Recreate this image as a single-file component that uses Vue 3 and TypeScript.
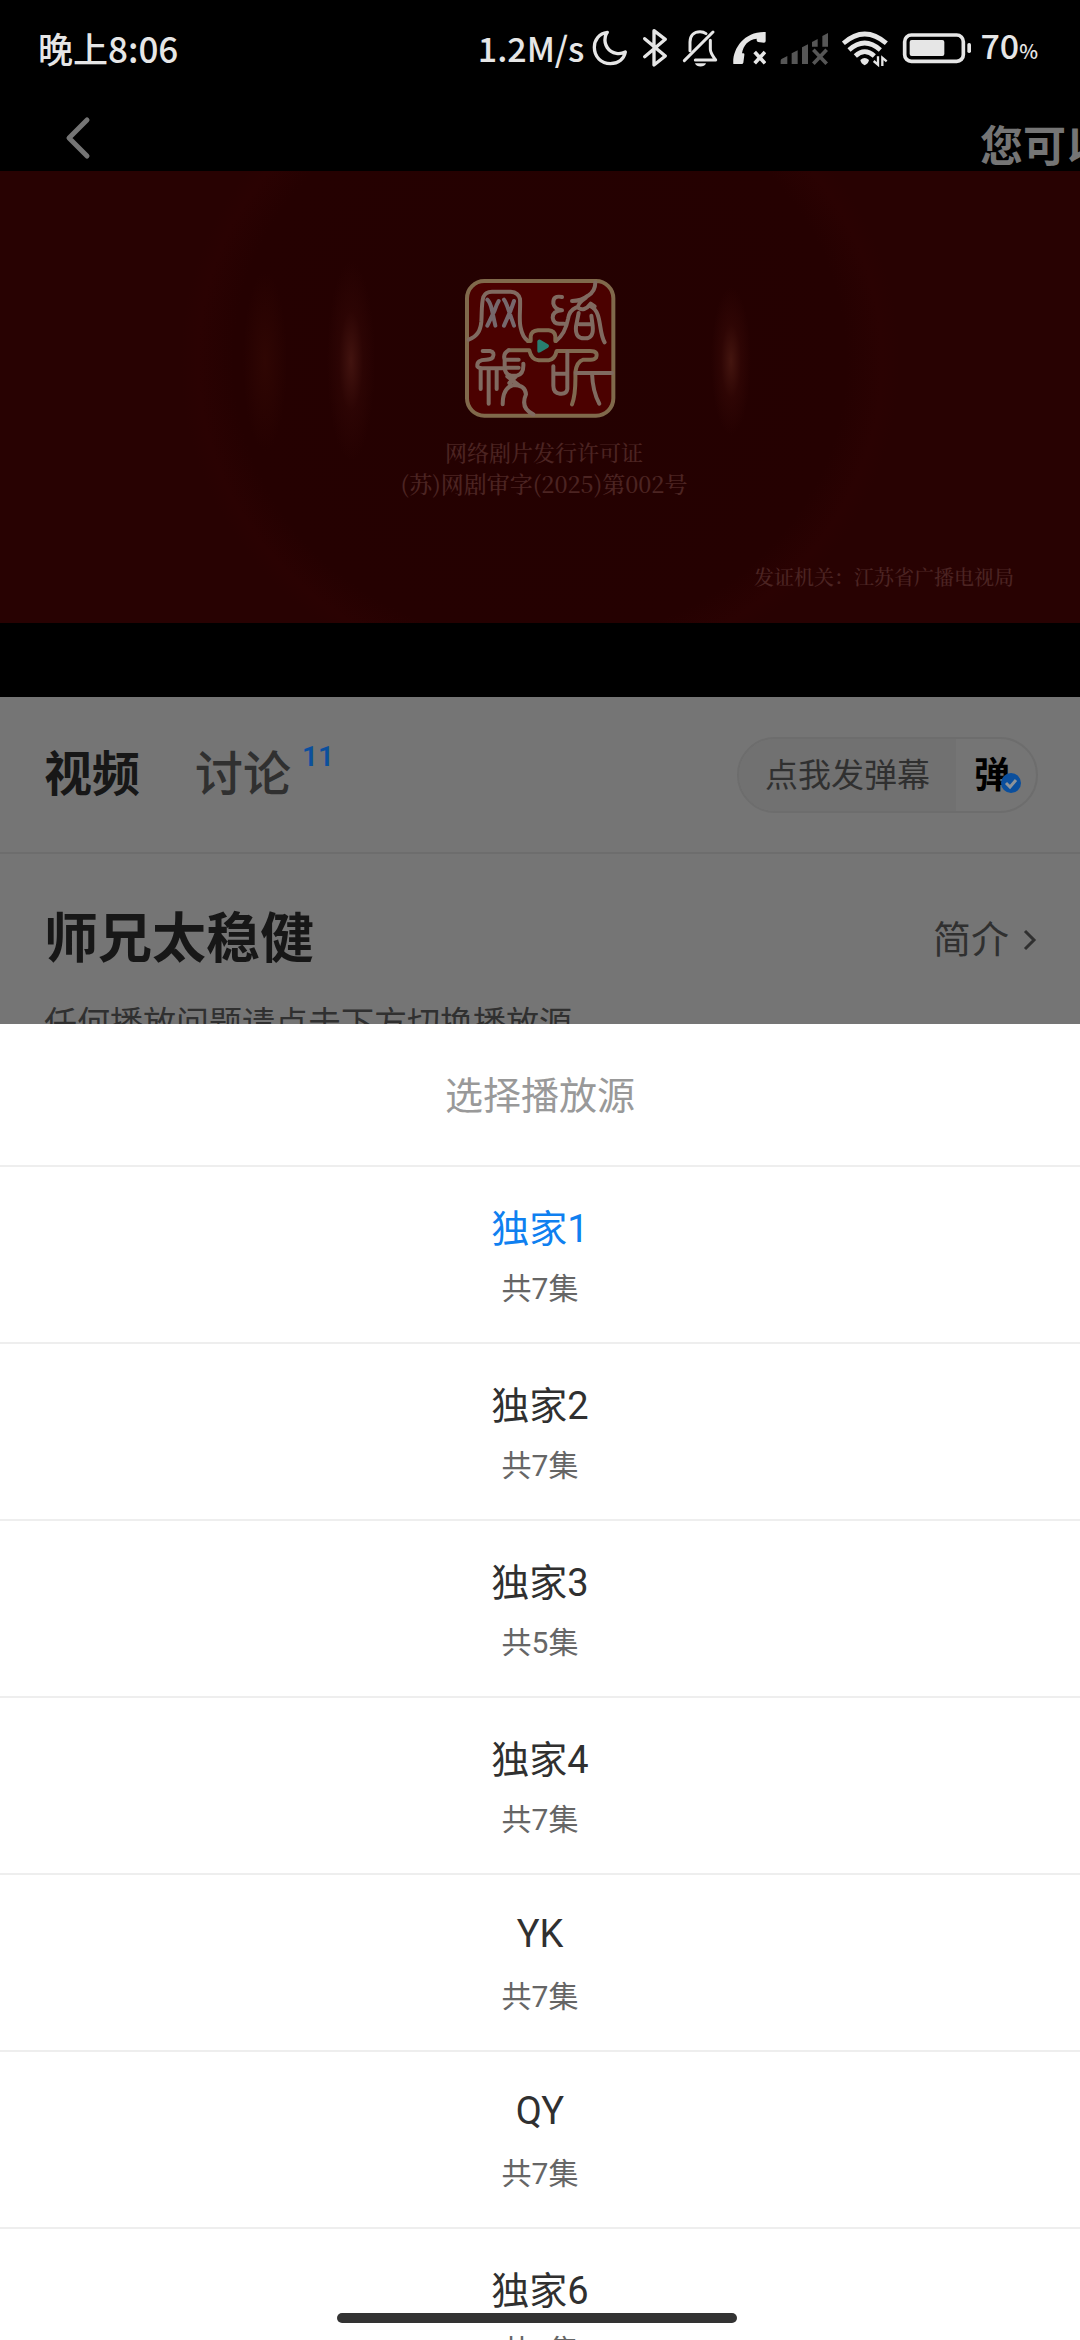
<script setup lang="ts">
import { ref } from 'vue'

interface Source {
  name: string
  episodes: number
}

const sources: Source[] = [
  { name: '独家1', episodes: 7 },
  { name: '独家2', episodes: 7 },
  { name: '独家3', episodes: 5 },
  { name: '独家4', episodes: 7 },
  { name: 'YK', episodes: 7 },
  { name: 'QY', episodes: 7 },
  { name: '独家6', episodes: 7 },
]

const selected = ref(0)
const isLatin = (name: string): boolean => /^[A-Z]+$/.test(name)
</script>

<template>
  <main class="page">
    <section class="player">
      <div class="status">
        <span class="clock">晚上8:06</span>
        <div class="indicators">
          <div class="pair">
            <span>1.2M/s</span>
            <svg width="36" height="40" viewBox="396 54 108 120" fill="none" stroke="#e6e6e6" stroke-width="10" stroke-linejoin="round">
              <path d="M442 67C417 70 403 90 403 112C403 141 424 161 451 161C475 161 492 147 496 126C488 130 479 132 469 130C445 126 431 104 436 80C437 75 439 71 442 67Z" />
            </svg>
          </div>
          <svg width="26" height="40" viewBox="546 54 78 120" fill="none" stroke="#e6e6e6" stroke-width="10" stroke-linecap="round" stroke-linejoin="round">
            <path d="M554 86L616 138L582 165V62L616 88L554 140" />
          </svg>
          <svg width="36" height="40" viewBox="666 54 108 120" fill="none" stroke="#e6e6e6" stroke-width="9" stroke-linecap="round" stroke-linejoin="round">
            <path d="M673 152L759 66" />
            <path d="M690 122V96C690 76 703 65 720 65C727 65 733 67 738 71M751 91V118C751 130 759 139 767 150H706" />
            <path d="M705 160H738C734 173 709 173 705 160Z" fill="#e6e6e6" stroke="none" />
          </svg>
          <svg width="34" height="40" viewBox="816 54 102 120" fill="none">
            <path d="M820 162C816 119 851 63 917 66V93Q917 98 912 98L894 96Q890 95 890 91V86C865 89 850 105 846 130H850Q854 130 853 135L850 158Q849 162 845 162Z" fill="#e6e6e6" />
            <path d="M884 126L915 160M915 126L884 160" stroke="#e6e6e6" stroke-width="11" />
          </svg>
          <svg width="48" height="40" viewBox="62 54 144 120" fill="#565656">
            <path d="M64 162V152Q64 148 68 146L84 138V162ZM97 162V130L115 121V162ZM128 162V112L146 103V162ZM158 110V96L175 87V110ZM189 110V78L206 69V110Z" />
            <path d="M162 119L202 161M202 119L162 161" stroke="#565656" stroke-width="11" />
          </svg>
          <svg width="46" height="40" viewBox="246 54 138 120" fill="none" stroke="#e6e6e6" stroke-width="14">
            <path d="M250 100Q314 44 379 100" />
            <path d="M267 120Q314 78 361 120" />
            <path d="M286 138Q314 112 343 138" />
            <path d="M301 150Q314 138 327 150Q325 161 314 166Q303 161 301 150Z" fill="#e6e6e6" stroke="none" />
            <path d="M354 139V164L341 153M367 168V143L380 154" stroke-width="7" />
          </svg>
          <div class="pair">
            <svg width="70" height="40" viewBox="426 54 210 120">
              <rect x="434" y="75" width="176" height="79" rx="20" fill="none" stroke="#e6e6e6" stroke-width="11" />
              <rect x="449" y="90" width="104" height="48" rx="6" fill="#e6e6e6" />
              <rect x="622" y="99" width="11" height="30" rx="5" fill="#e6e6e6" />
            </svg>
            <span>70<small>%</small></span>
          </div>
        </div>
      </div>

      <div class="nav">
        <button class="back" aria-label="返回">
          <svg width="28" height="46" viewBox="0 0 28 46" fill="none" stroke="#757575" stroke-width="5" stroke-linecap="round" stroke-linejoin="round">
            <path d="M23 5L5 23L23 41" />
          </svg>
        </button>
        <span class="ticker">您可以</span>
      </div>

      <div class="video">
        <svg class="seal" width="152" height="140" viewBox="72 53 456 420" fill="none" stroke-linecap="round" stroke-linejoin="round">
          <rect x="81" y="62" width="439" height="404" rx="52" fill="#4b0100" stroke="#80694b" stroke-width="12" />
          <g stroke="#806a60" stroke-width="12">
            <path d="M86 238C112 228 121 212 124 184C126 155 124 130 130 110Q136 94 156 94H212Q236 96 240 116C242 145 236 180 242 202Q248 232 264 242" />
            <path d="M142 118Q150 124 156 150L166 196M176 122Q170 132 164 150L142 196M192 118Q198 126 206 150L222 196M222 122Q218 134 212 150L192 196" stroke="#76686c" />
            <path d="M366 110Q338 104 340 130Q344 148 366 150M366 150Q338 152 338 172Q340 192 362 190H372M408 142Q388 150 384 176Q376 220 348 242" />
            <path d="M396 122Q424 122 444 106Q466 94 466 66M438 112Q412 130 414 142Q432 156 452 130L464 138M416 158L408 198Q404 236 436 234Q462 234 458 196L454 166M418 192H454M452 138C488 156 474 214 494 246" />
            <path d="M264 242H272V228Q274 212 294 210H326Q344 212 346 228V242M206 270H268Q274 298 296 300H326Q344 298 350 272H450Q476 272 468 292Q462 300 446 298H430Q410 304 406 336Q408 400 396 432" stroke="#806950" />
            <path d="M128 272H150Q166 276 158 292Q152 298 138 298Q110 298 112 318Q116 324 132 324H196M122 326V386M146 326V430M170 326V386" />
            <path d="M206 270Q188 280 194 298V318Q194 344 214 346H230Q252 342 250 310M198 298H236M198 322H236M228 348L208 368M202 348L238 376M188 432Q188 382 220 374Q256 374 258 402Q240 444 280 462" />
            <path d="M382 274V386Q380 402 360 400Q340 398 340 376V318M342 340H380M408 338H516M456 338Q458 394 478 430" />
          </g>
          <path d="M292 242Q294 236 301 238L324 252Q330 257 324 262L301 276Q292 280 292 272Z" fill="#287e70" />
        </svg>
        <p class="permit">网络剧片发行许可证</p>
        <p class="permit number">(苏)网剧审字(2025)第002号</p>
        <p class="issuer">发证机关：江苏省广播电视局</p>
      </div>
      <div class="letterbox"></div>
    </section>

    <nav class="tabs">
      <button class="tab active">视频</button>
      <button class="tab">讨论</button>
      <span class="count">11</span>
      <div class="danmu">
        <button class="send">点我发弹幕</button>
        <button class="toggle">
          <span>弹</span>
          <svg class="check" width="22" height="22" viewBox="0 0 22 22" fill="none">
            <circle cx="11" cy="11" r="10" fill="#0b4f9d" />
            <path d="M6 11L10 15L16 8" stroke="#8d9399" stroke-width="3" />
          </svg>
        </button>
      </div>
    </nav>

    <section class="details">
      <div class="heading">
        <h1>师兄太稳健</h1>
        <a class="intro" href="#">
          简介
          <svg width="14" height="24" viewBox="0 0 14 24" fill="none" stroke="#303030" stroke-width="3">
            <path d="M2 3L11 12L2 21" />
          </svg>
        </a>
      </div>
      <p class="hint">任何播放问题请点击下方切换播放源</p>
    </section>
  </main>

  <section class="sheet" role="dialog" aria-labelledby="sheet-title">
    <h2 id="sheet-title">选择播放源</h2>
    <button
      v-for="(source, index) in sources"
      :key="source.name"
      class="source"
      :class="{ selected: index === selected }"
      @click="selected = index"
    >
      <span class="name" :class="{ latin: isLatin(source.name) }">{{ source.name }}</span>
      <span class="episodes">共{{ source.episodes }}集</span>
    </button>
  </section>
  <div class="home-bar"></div>
</template>

<style>
body {
  margin: 0;
  background: #757575;
  overflow: hidden;
}
</style>

<style scoped>
.page,
.sheet {
  font-family: Roboto, "Noto Sans CJK SC", sans-serif;
}

.page {
  height: 100vh;
  overflow: hidden;
  color: #303030;
}

button {
  margin: 0;
  padding: 0;
  border: 0;
  background: none;
  color: inherit;
  font: inherit;
}

h1,
h2,
p {
  margin: 0;
}

svg {
  display: block;
  flex: none;
}

.player {
  background: #000;
}

.status {
  display: flex;
  align-items: center;
  justify-content: space-between;
  height: 96px;
  padding: 0 42px 0 38px;
  color: #e6e6e6;
  font-family: "Noto Sans CJK SC", sans-serif;
  font-size: 34px;
  font-weight: 500;
  line-height: 48px;
}

.clock {
  font-size: 35px;
}

.indicators {
  display: flex;
  align-items: center;
  gap: 14px;
}

.pair {
  display: flex;
  align-items: center;
  gap: 8px;
}

.pair small {
  font-size: 20px;
}

.nav {
  display: flex;
  align-items: center;
  justify-content: space-between;
  height: 75px;
  overflow: hidden;
}

.back {
  padding: 14px 64px 6px;
}

.ticker {
  flex: none;
  width: 100px;
  padding-top: 26px;
  color: #757575;
  font-size: 43px;
  font-weight: 700;
  line-height: 48px;
  white-space: nowrap;
}

.video {
  display: flex;
  flex-direction: column;
  align-items: center;
  box-sizing: border-box;
  aspect-ratio: 270 / 113;
  padding-top: 107px;
  color: #4c2422;
  font-family: "Noto Serif CJK SC", "Noto Sans CJK SC", serif;
  font-weight: 500;
  background:
    radial-gradient(ellipse 24px 100px at 351px 190px, #42130f 0%, #35090770 50%, transparent 100%),
    radial-gradient(ellipse 20px 74px at 731px 190px, #44150f 0%, #3a0b0870 50%, transparent 100%),
    radial-gradient(ellipse 22px 90px at 265px 190px, #2f0603 0%, transparent 100%),
    radial-gradient(ellipse 360px 330px at 50% 190px, #240101 0%, #250101 85%, #2a0202 95%, #280202 100%);
}

.seal {
  margin-bottom: 18px;
}

.permit {
  padding-left: 8px;
  font-size: 22px;
  line-height: 32px;
}

.number {
  font-size: 23px;
}

.issuer {
  align-self: flex-end;
  margin-top: 61px;
  padding-right: 66px;
  font-size: 20px;
  line-height: 32px;
}

.letterbox {
  height: 74px;
}

.tabs {
  display: flex;
  align-items: center;
  height: 155px;
  padding: 0 42px 0 44px;
  border-bottom: 2px solid #6d6d6d;
  background: #757575;
}

.tab {
  margin-right: 55px;
  font-size: 48px;
  font-weight: 500;
  line-height: 64px;
}

.tab.active {
  color: #171717;
  font-weight: 700;
}

.count {
  align-self: flex-start;
  margin: 44px auto 0 -44px;
  color: #0b4f9d;
  font-size: 28px;
  font-weight: 600;
  line-height: 32px;
}

.danmu {
  display: flex;
  overflow: hidden;
  border: 2px solid #6d6d6d;
  border-radius: 38px;
}

.send {
  padding: 2px 26px 0;
  background: #717171;
  font-size: 33px;
  line-height: 70px;
}

.toggle {
  display: flex;
  position: relative;
  width: 80px;
  padding-top: 2px;
  padding-left: 18px;
  color: #000;
  font-size: 36px;
  font-weight: 700;
  line-height: 70px;
}

.check {
  position: absolute;
  right: 14px;
  bottom: 17px;
}

.details {
  padding: 50px 43px 0 44px;
  background: #757575;
}

.heading {
  display: flex;
  align-items: center;
  justify-content: space-between;
}

h1 {
  color: #171717;
  font-size: 54px;
  font-weight: 700;
  line-height: 72px;
}

.intro {
  display: flex;
  align-items: center;
  gap: 14px;
  color: inherit;
  font-size: 38px;
  line-height: 48px;
  text-decoration: none;
}

.hint {
  margin-top: 24px;
  font-size: 33px;
  line-height: 48px;
}

.sheet {
  position: fixed;
  inset: 1024px 0 0;
  overflow: hidden;
  background: #fff;
  color: #303030;
}

h2 {
  padding-top: 3px;
  border-bottom: 2px solid #eee;
  color: #999;
  font-size: 38px;
  font-weight: 400;
  line-height: 138px;
  text-align: center;
}

.source {
  display: flex;
  flex-direction: column;
  align-items: center;
  width: 100%;
  height: 177px;
  padding-top: 34px;
  border-bottom: 2px solid #eee;
}

.name {
  font-size: 38px;
  line-height: 56px;
}

.name.latin {
  margin-bottom: 6px;
  line-height: 50px;
}

.selected .name {
  color: #0f80f0;
}

.episodes {
  margin-top: 8px;
  color: #666;
  font-size: 30px;
  line-height: 48px;
}

.home-bar {
  position: fixed;
  bottom: 17px;
  left: 31.2%;
  width: 37%;
  height: 10px;
  border-radius: 5px;
  background: #333;
}
</style>
